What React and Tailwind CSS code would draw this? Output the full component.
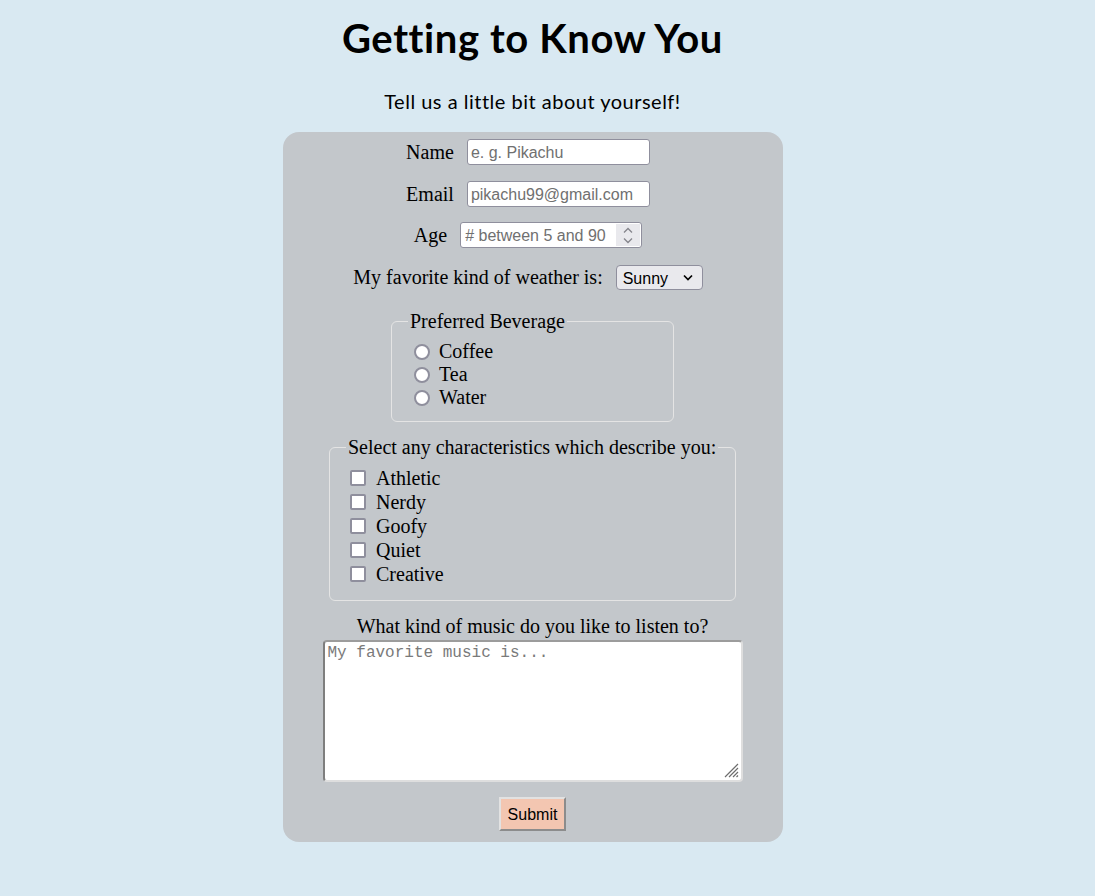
export default function App() {
  const beverages = ["Coffee", "Tea", "Water"];
  const traits = ["Athletic", "Nerdy", "Goofy", "Quiet", "Creative"];
  return (
    <div className="min-h-[896px] w-full bg-[#d9e9f2] text-black">
      <div className="w-[1065px] flex flex-col items-center pt-[14px]">
        <h1 className="font-['Lato',sans-serif] font-bold text-[40px] leading-[48px] tracking-[0.6px]">
          Getting to Know You
        </h1>
        <p className="mt-[27px] font-['Lato',sans-serif] text-[20px] leading-[24px] tracking-[0.5px]">
          Tell us a little bit about yourself!
        </p>
        <form className="mt-[19px] w-[500px] rounded-[16px] bg-[#c3c7cb] pt-[7px] pb-[11px] flex flex-col items-center font-['Liberation_Serif',serif] text-[20px] leading-[23px]">
          <div className="flex items-center h-[26px] pr-[9px]">
            <label>Name</label>
            <input
              type="text"
              placeholder="e. g. Pikachu"
              className="ml-[13px] w-[183px] h-[26px] bg-white border border-[#8f8f9d] rounded-[3px] px-[3px] pt-[1px] font-['Liberation_Sans',sans-serif] text-[16px] placeholder:text-[#707070] outline-none"
            />
          </div>
          <div className="mt-[16px] flex items-center h-[26px] pr-[9px]">
            <label>Email</label>
            <input
              type="text"
              placeholder="pikachu99@gmail.com"
              className="ml-[13px] w-[183px] h-[26px] bg-white border border-[#8f8f9d] rounded-[3px] px-[3px] pt-[1px] font-['Liberation_Sans',sans-serif] text-[16px] placeholder:text-[#707070] outline-none"
            />
          </div>
          <div className="mt-[15px] flex items-center h-[26px] pr-[9px]">
            <label>Age</label>
            <div className="ml-[13px] w-[182px] h-[26px] bg-white border border-[#8f8f9d] rounded-[3px] flex items-stretch">
              <input
                type="text"
                placeholder="# between 5 and 90"
                className="min-w-0 flex-1 pl-[4px] pt-[1px] font-['Liberation_Sans',sans-serif] text-[16px] placeholder:text-[#707070] outline-none bg-transparent"
              />
              <div className="w-[24px] my-[1px] mr-[1px] bg-[#e9e9ed] flex flex-col items-center justify-center gap-[3px]">
                <svg width="12" height="7" viewBox="0 0 12 7">
                  <path d="M2 5.5 L6 1.5 L10 5.5" fill="none" stroke="#85858c" strokeWidth="1.3" />
                </svg>
                <svg width="12" height="7" viewBox="0 0 12 7">
                  <path d="M2 1.5 L6 5.5 L10 1.5" fill="none" stroke="#85858c" strokeWidth="1.3" />
                </svg>
              </div>
            </div>
          </div>
          <div className="mt-[17px] flex items-center h-[25px] pr-[9px]">
            <label>My favorite kind of weather is:</label>
            <div className="relative ml-[13px]">
              <select className="appearance-none w-[87px] h-[25px] bg-[#e9e9ed] border border-[#8f8f9d] rounded-[4px] pl-[6px] pt-[1px] font-['Liberation_Sans',sans-serif] text-[16px] outline-none">
                <option>Sunny</option>
                <option>Rainy</option>
                <option>Snowy</option>
                <option>Cloudy</option>
              </select>
              <svg
                className="absolute right-[10px] top-[9px] pointer-events-none"
                width="10"
                height="7"
                viewBox="0 0 10 7"
              >
                <path d="M1 1.5 L5 5.5 L9 1.5" fill="none" stroke="#000" strokeWidth="1.7" />
              </svg>
            </div>
          </div>

          <fieldset className="mt-[20px] w-[283px] border border-[#e4e4e4] rounded-[6px] pl-[16px] pr-[16px] pt-[7px] pb-[12px]">
            <legend className="px-[2px]">Preferred Beverage</legend>
            {beverages.map((b) => (
              <label key={b} className="flex items-center h-[23px]">
                <input
                  type="radio"
                  name="beverage"
                  className="appearance-none ml-[6px] mr-[9px] w-[16px] h-[16px] rounded-full border-2 border-[#8f8f9d] bg-white"
                />
                <span>{b}</span>
              </label>
            ))}
          </fieldset>

          <fieldset className="mt-[14px] w-[407px] border border-[#e4e4e4] rounded-[6px] pl-[16px] pr-[16px] pt-[7px] pb-[14px]">
            <legend className="px-[2px]">Select any characteristics which describe you:</legend>
            {traits.map((t) => (
              <label key={t} className="flex items-center h-[24px]">
                <input
                  type="checkbox"
                  className="appearance-none ml-[4px] mr-[10px] w-[16px] h-[16px] rounded-[2px] border-2 border-[#8f8f9d] bg-white"
                />
                <span>{t}</span>
              </label>
            ))}
          </fieldset>

          <label className="mt-[14px] block">What kind of music do you like to listen to?</label>
          <div className="relative mt-[2px] w-[420px] h-[142px]">
            <textarea
              placeholder="My favorite music is..."
              className="block w-[420px] h-[142px] resize-none bg-white border-2 border-t-[#9c9c9c] border-l-[#7e7e7e] border-r-[#dedede] border-b-[#dedede] rounded-[4px] px-[3px] py-[2px] font-['Liberation_Mono',monospace] text-[16px] leading-[18px] placeholder:text-[#7a7a7a] outline-none"
            />
            <svg
              className="absolute right-[4px] bottom-[4px] pointer-events-none"
              width="16"
              height="16"
              viewBox="0 0 16 16"
            >
              <path d="M15 2 L2 15 M15 6 L6 15 M15 10 L10 15 M15 13.5 L13.5 15" stroke="#6d6d6d" strokeWidth="1.2" />
            </svg>
          </div>

          <button
            type="button"
            className="mt-[15px] w-[67px] h-[34px] bg-[#f3c6b1] border-2 border-t-[#e2e2e2] border-l-[#e2e2e2] border-r-[#8c8c8c] border-b-[#8c8c8c] font-['Liberation_Sans',sans-serif] text-[16px]"
          >
            Submit
          </button>
        </form>
      </div>
    </div>
  );
}
